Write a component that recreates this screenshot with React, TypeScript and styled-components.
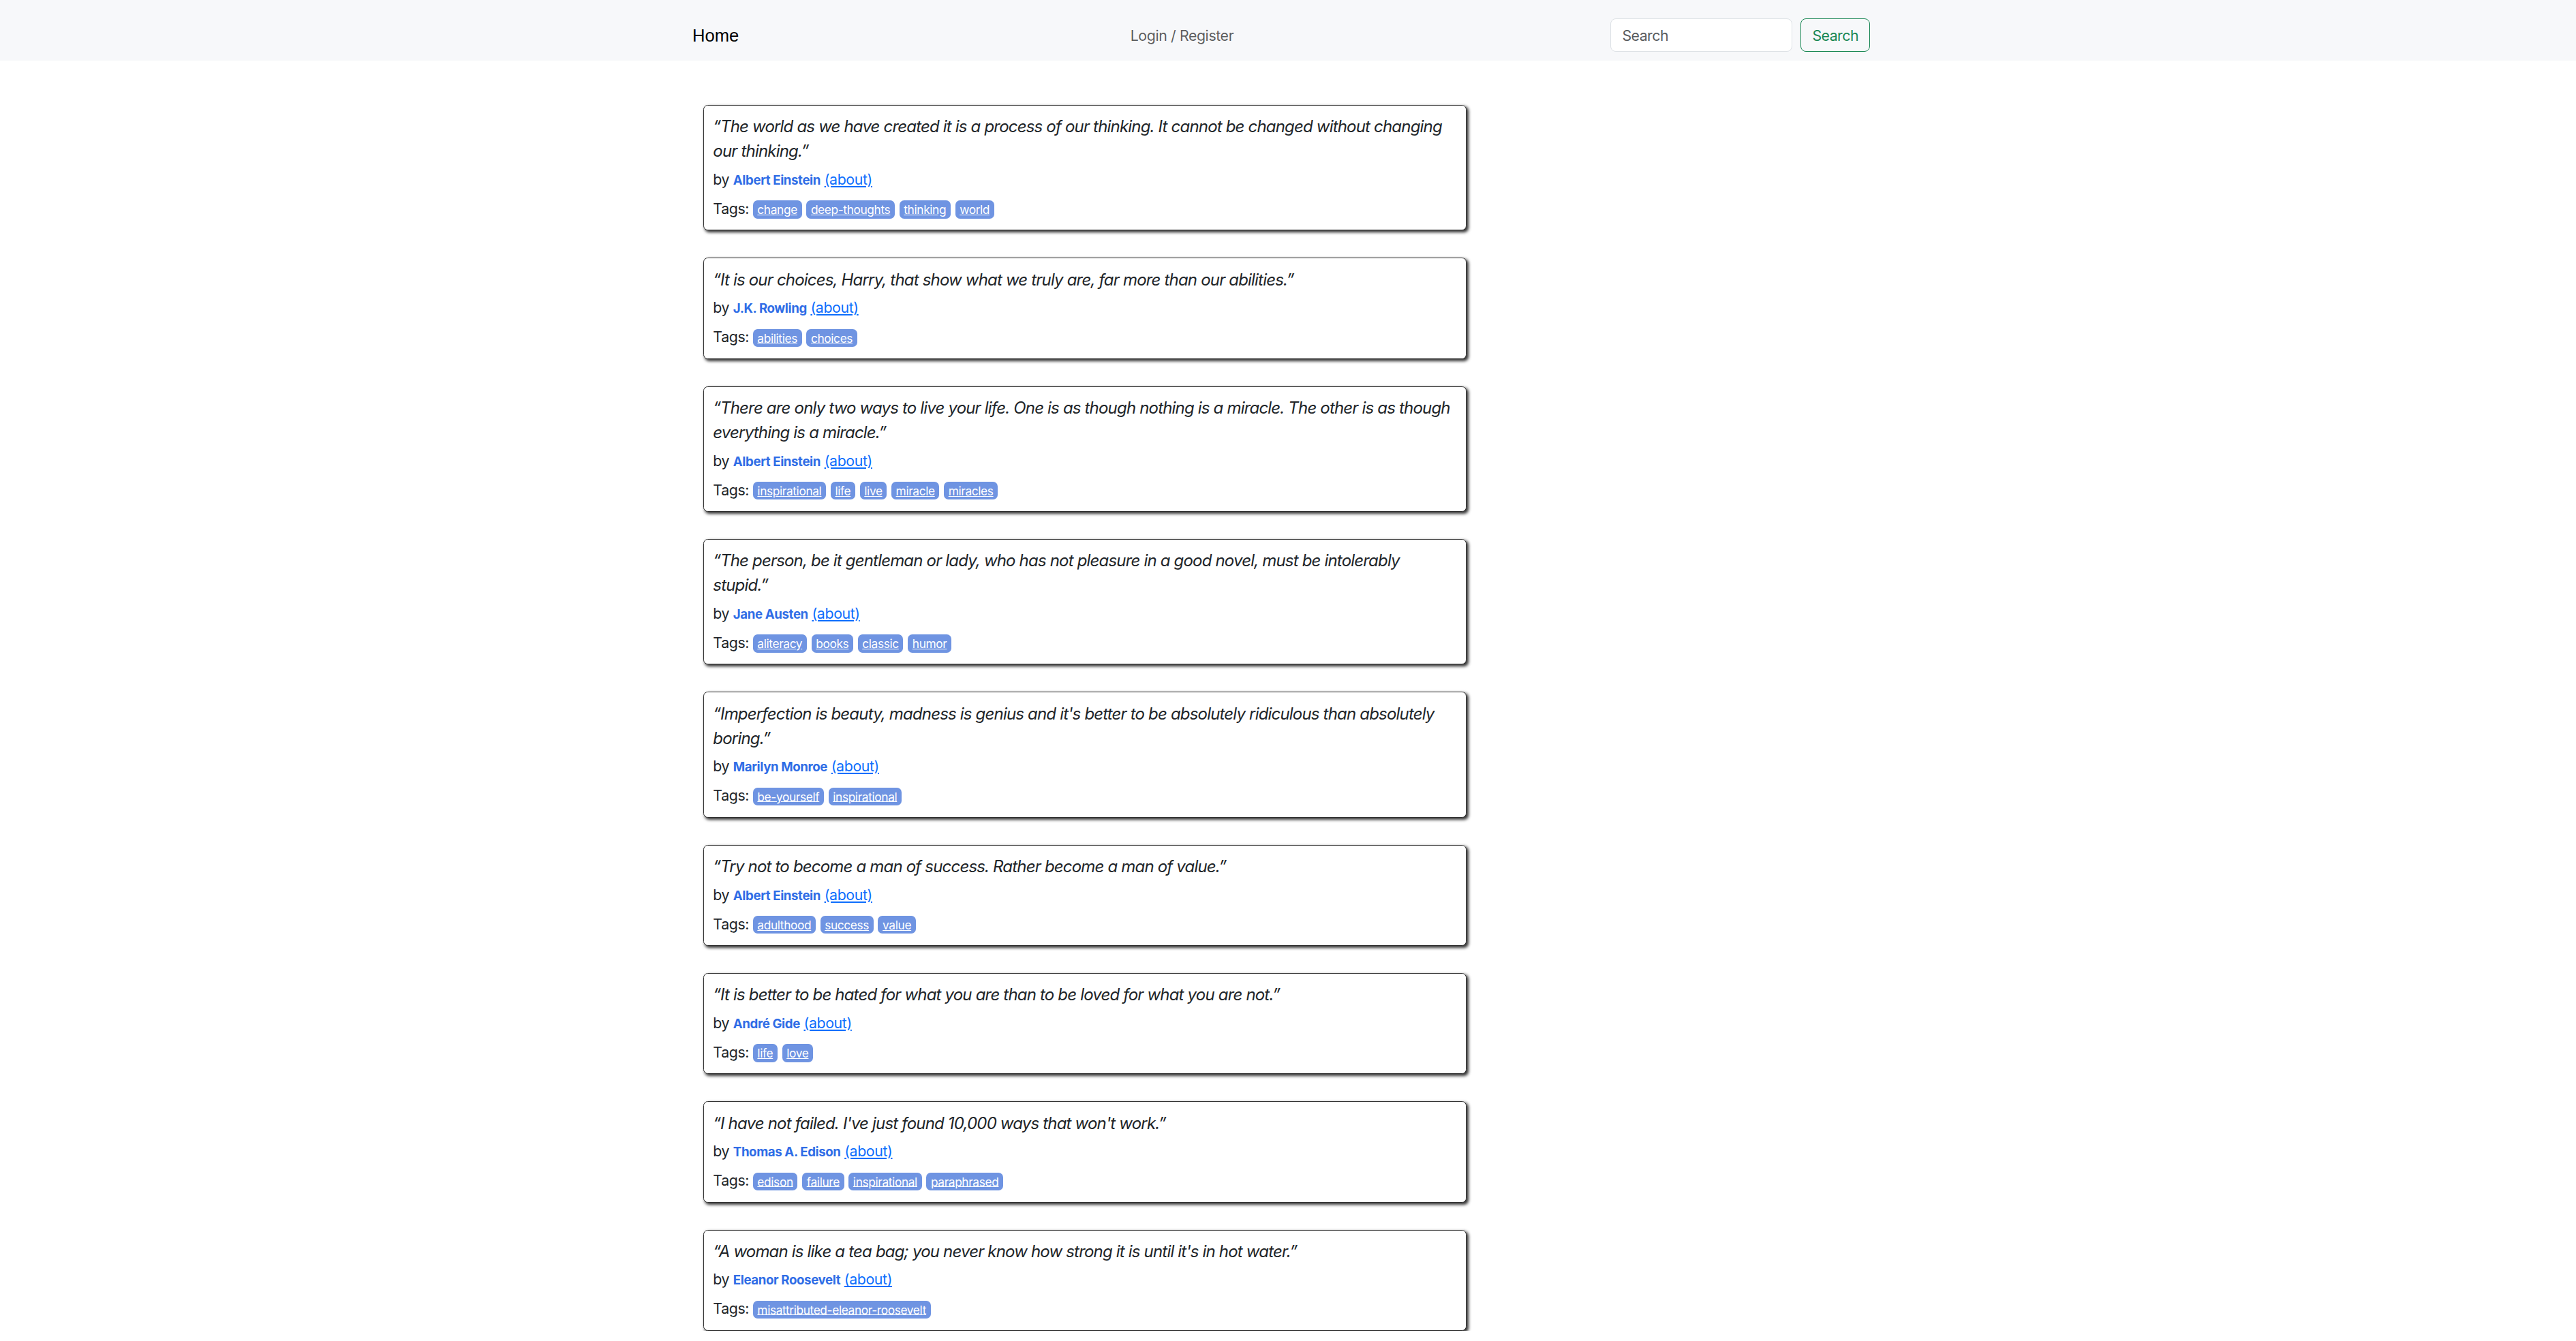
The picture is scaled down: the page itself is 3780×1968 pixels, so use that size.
import React from "react";
import styled, { createGlobalStyle } from "styled-components";

const GlobalStyle = createGlobalStyle`
  html, body {
    margin: 0;
    padding: 0;
    background: #ffffff;
    overflow: hidden;
  }
  body {
    font-family: "Inter", "Noto Sans", "Liberation Sans", sans-serif;
    letter-spacing: -0.024em;
    color: #212529;
  }
  * { box-sizing: border-box; }
`;

const Navbar = styled.nav`
  background: #f7f8fa;
  height: 89px;
  padding: 27px 20px 13px 0;
`;

const Container = styled.div`
  max-width: 1728px;
  margin: 0 auto;
`;

const NavRow = styled(Container)`
  display: flex;
  align-items: center;
  height: 49px;
`;

const Brand = styled.a`
  font-family: "Liberation Sans", Arial, sans-serif;
  font-size: 25.6px;
  line-height: 38px;
  letter-spacing: 0;
  color: #000;
  text-decoration: none;
  margin-right: 21.3px;
  padding-top: 1px;
`;

const NavCenter = styled.div`
  flex: 1;
  display: flex;
  justify-content: center;
`;

const NavLink = styled.a`
  font-size: 21.3px;
  line-height: 32px;
  color: rgba(0, 0, 0, 0.65);
  text-decoration: none;
`;

const SearchForm = styled.form`
  display: flex;
  gap: 12px;
  margin: 0;
`;

const SearchInput = styled.input`
  width: 267px;
  height: 49px;
  padding: 8px 16px;
  font-family: inherit;
  font-size: 21.3px;
  letter-spacing: -0.024em;
  color: #212529;
  background: #fff;
  border: 1px solid #dee2e6;
  border-radius: 8px;
  outline: none;
  &::placeholder {
    color: #595c5f;
  }
`;

const SearchButton = styled.button`
  height: 49px;
  padding: 8px 16px;
  font-family: inherit;
  font-size: 21.3px;
  letter-spacing: -0.024em;
  color: #198754;
  background: transparent;
  border: 1px solid #198754;
  border-radius: 8px;
`;

const Main = styled.main`
  padding: 65px 20px 0 0;
`;

const QuoteList = styled.div`
  display: flex;
  flex-direction: column;
  gap: 40px;
  padding-left: 16px;
`;

const QuoteCard = styled.div`
  width: 1120px;
  padding: 13.33px;
  border: 1px solid #333333;
  border-radius: 6.67px;
  box-shadow: 2.67px 2.67px 4px #333333;
  background: #fff;
`;

const QuoteText = styled.span`
  display: block;
  font-size: 24px;
  line-height: 36px;
  font-style: italic;
  letter-spacing: -0.034em;
  margin-bottom: 6.67px;
`;

const Byline = styled.span`
  display: block;
  font-size: 21.33px;
  line-height: 32px;
  margin-bottom: 6.67px;
`;

const Author = styled.small`
  font-size: 18.67px;
  font-weight: 700;
  color: #2f6de6;
`;

const About = styled.a`
  color: #0d6efd;
  text-decoration: underline;
`;

const Tags = styled.div`
  margin-top: 9px;
  font-size: 21.33px;
  line-height: 32px;
`;

const Tag = styled.a`
  font-size: 17.33px;
  padding: 2.67px 6.67px;
  margin-right: 6.67px;
  border-radius: 6.67px;
  background: #6f94e2;
  color: #ffffff;
  text-decoration: underline;
`;

type Quote = { text: string; author: string; tags: string[] };

const quotes: Quote[] = [
  {
    text: "The world as we have created it is a process of our thinking. It cannot be changed without changing our thinking.",
    author: "Albert Einstein",
    tags: ["change", "deep-thoughts", "thinking", "world"],
  },
  {
    text: "It is our choices, Harry, that show what we truly are, far more than our abilities.",
    author: "J.K. Rowling",
    tags: ["abilities", "choices"],
  },
  {
    text: "There are only two ways to live your life. One is as though nothing is a miracle. The other is as though everything is a miracle.",
    author: "Albert Einstein",
    tags: ["inspirational", "life", "live", "miracle", "miracles"],
  },
  {
    text: "The person, be it gentleman or lady, who has not pleasure in a good novel, must be intolerably stupid.",
    author: "Jane Austen",
    tags: ["aliteracy", "books", "classic", "humor"],
  },
  {
    text: "Imperfection is beauty, madness is genius and it's better to be absolutely ridiculous than absolutely boring.",
    author: "Marilyn Monroe",
    tags: ["be-yourself", "inspirational"],
  },
  {
    text: "Try not to become a man of success. Rather become a man of value.",
    author: "Albert Einstein",
    tags: ["adulthood", "success", "value"],
  },
  {
    text: "It is better to be hated for what you are than to be loved for what you are not.",
    author: "André Gide",
    tags: ["life", "love"],
  },
  {
    text: "I have not failed. I've just found 10,000 ways that won't work.",
    author: "Thomas A. Edison",
    tags: ["edison", "failure", "inspirational", "paraphrased"],
  },
  {
    text: "A woman is like a tea bag; you never know how strong it is until it's in hot water.",
    author: "Eleanor Roosevelt",
    tags: ["misattributed-eleanor-roosevelt"],
  },
];

export default function App() {
  return (
    <>
      <GlobalStyle />
      <Navbar>
        <NavRow>
          <Brand href="#">Home</Brand>
          <NavCenter>
            <NavLink href="#">Login / Register</NavLink>
          </NavCenter>
          <SearchForm onSubmit={(e) => e.preventDefault()}>
            <SearchInput type="search" placeholder="Search" />
            <SearchButton type="submit">Search</SearchButton>
          </SearchForm>
        </NavRow>
      </Navbar>
      <Main>
        <Container>
          <QuoteList>
            {quotes.map((q, i) => (
              <QuoteCard key={i}>
                <QuoteText>{"\u201C" + q.text + "\u201D"}</QuoteText>
                <Byline>
                  by <Author>{q.author}</Author> <About href="#">(about)</About>
                </Byline>
                <Tags>
                  Tags:{" "}
                  {q.tags.map((t) => (
                    <Tag key={t} href="#">
                      {t}
                    </Tag>
                  ))}
                </Tags>
              </QuoteCard>
            ))}
          </QuoteList>
        </Container>
      </Main>
    </>
  );
}
